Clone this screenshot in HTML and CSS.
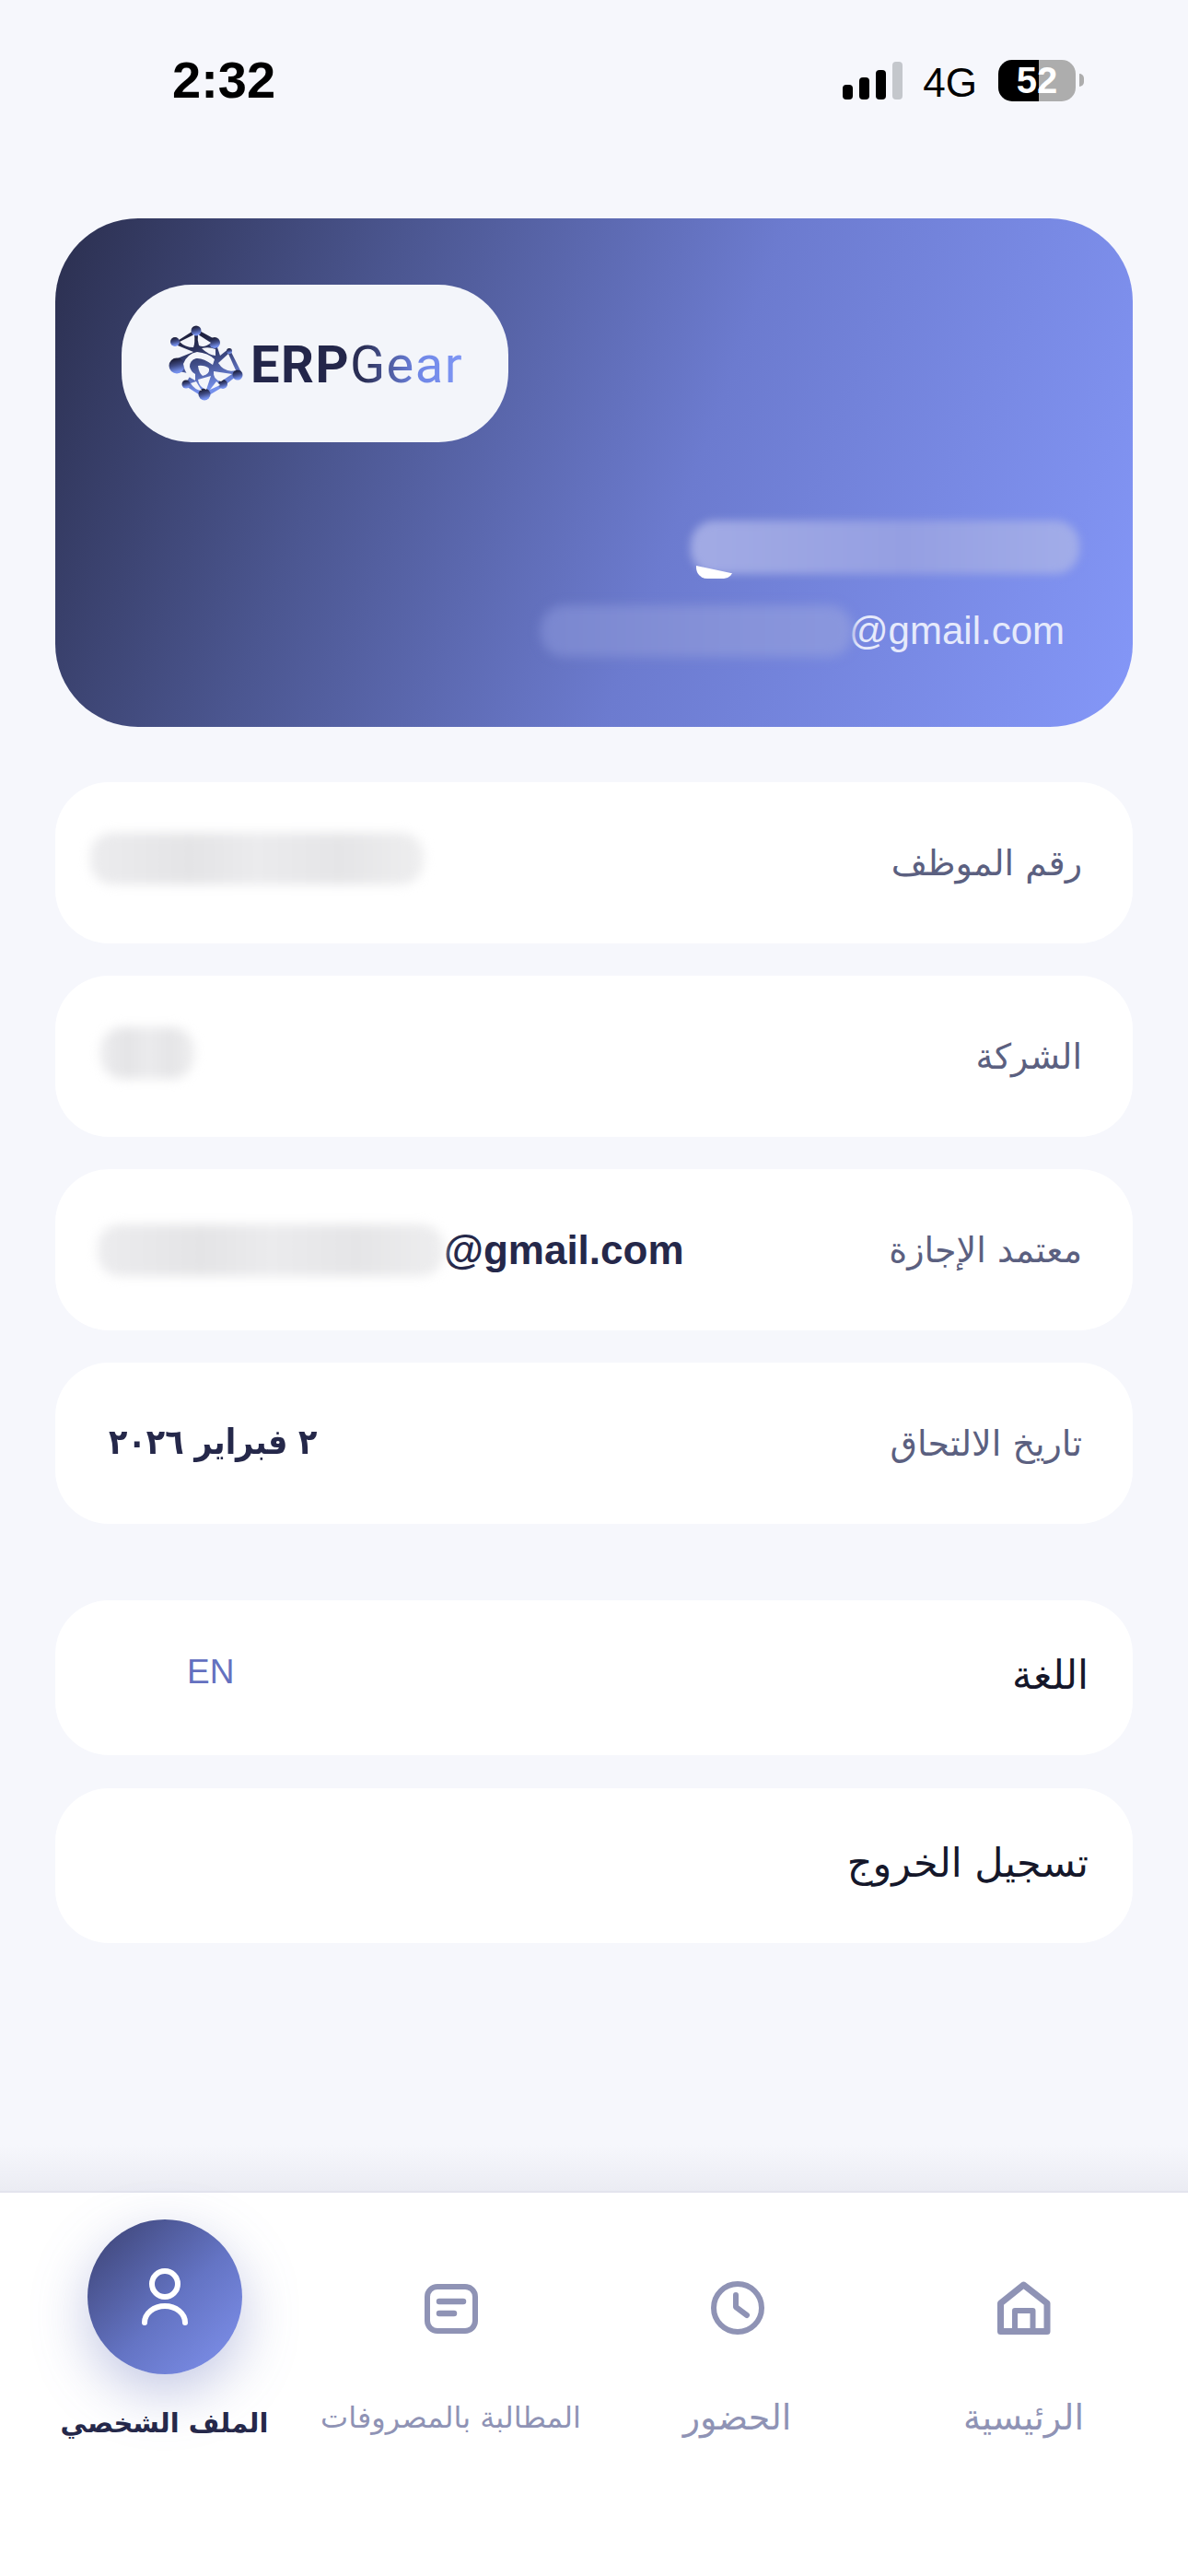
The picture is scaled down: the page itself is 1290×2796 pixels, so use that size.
FILE: index.html
```html
<!DOCTYPE html>
<html lang="ar" dir="rtl">
<head>
    <meta charset="UTF-8">
    <title>الملف الشخصي</title>
    <link rel="stylesheet" href="styles.css">
</head>
<body>
    <div class="status-bar" dir="ltr">
        <span class="time">2:32</span>
        <div class="status-right">
            <div class="signal">
                <span class="bar bar-1"></span>
                <span class="bar bar-2"></span>
                <span class="bar bar-3"></span>
                <span class="bar bar-4"></span>
            </div>
            <span class="network">4G</span>
            <div class="battery">52</div>
            <span class="battery-nub"></span>
        </div>
    </div>

    <main class="content">
        <section class="hero" dir="ltr">
            <div class="logo-pill">
                <svg class="logo-mark" viewBox="0 0 110 110">
                    <defs>
                        <linearGradient id="markFill" x1="0" y1="0" x2="0.25" y2="1">
                            <stop offset="0.2" stop-color="#1f2240"/>
                            <stop offset="0.55" stop-color="#3e4a84"/>
                            <stop offset="0.95" stop-color="#7590ec"/>
                        </linearGradient>
                    </defs>
                    <g fill="url(#markFill)">
                        <polygon points="43,17 63,28 69,46 79,38 92,64 72,80 52,92 30,78 38,66 20,62 20,50 40,42 18,33"/>
                        <circle cx="43" cy="19" r="5.5"/>
                        <circle cx="20" cy="31" r="5"/>
                        <circle cx="63" cy="32" r="6"/>
                        <circle cx="22" cy="57" r="8.5"/>
                        <circle cx="79" cy="41" r="3"/>
                        <circle cx="88" cy="67" r="5.5"/>
                        <circle cx="72" cy="77" r="5"/>
                        <circle cx="32" cy="77" r="4.5"/>
                        <circle cx="52" cy="88" r="6.5"/>
                    </g>
                    <g fill="#f3f5fa">
                        <path d="M25,31 L41,23 Q42,32 40,37 Q31,37 25,31Z"/>
                        <path d="M45,23 L59,32 Q52,38 46,35 Q44,29 45,23Z"/>
                        <path d="M49,38 Q57,36 64,39 L64,46 Q56,45 49,38Z"/>
                        <path d="M29,55 Q33,44 44,42 Q56,43 63,50 L61,56 Q50,48 43,49 Q36,51 36,58 Q37,63 42,66 L42,73 Q31,69 29,55Z"/>
                        <path d="M45,57 Q52,56 57,60 Q58,66 50,68 Q46,65 45,57Z"/>
                        <path d="M67,54 L78,44 L86,62 Q74,65 67,54Z"/>
                        <path d="M62,63 L82,66 L70,74 Q61,72 62,63Z"/>
                        <path d="M45,72 L59,68 L54,83 Q46,80 45,72Z"/>
                        <path d="M37,76 L43,74 L49,84 Q41,83 37,76Z"/>
                        <path d="M58,83 L65,74 L69,78 Z"/>
                    </g>
                </svg>
                <span class="logo-text"><span class="logo-erp">ERP</span><span class="logo-gear">Gear</span></span>
            </div>
            <div class="hero-name">
                <span class="smudge"></span>
            </div>
            <div class="hero-email">
                <span class="hero-email-blur"></span>
                <span>@gmail.com</span>
            </div>
        </section>

        <section class="info-list">
            <div class="row">
                <span class="label">رقم الموظف</span>
                <span class="blur blur-id"></span>
            </div>
            <div class="row">
                <span class="label">الشركة</span>
                <span class="blur blur-company"></span>
            </div>
            <div class="row">
                <span class="label">معتمد الإجازة</span>
                <span class="value value-email" dir="ltr"><span class="blur blur-email"></span>@gmail.com</span>
            </div>
            <div class="row">
                <span class="label">تاريخ الالتحاق</span>
                <span class="value value-date">٢ فبراير ٢٠٢٦</span>
            </div>
        </section>

        <section class="action-list">
            <div class="row action">
                <span class="action-label">اللغة</span>
                <span class="lang">EN</span>
            </div>
            <div class="row action">
                <span class="action-label">تسجيل الخروج</span>
            </div>
        </section>

        <div class="tab-fade"></div>
    </main>

    <nav class="tabbar">
        <div class="tab">
            <svg class="tab-icon" viewBox="0 0 58 58" fill="none" stroke="#8f93b5" stroke-width="7" stroke-linejoin="round">
                <path d="M3.5,54.5 V24 L28.5,4 L54,24 V54.5 Z"/>
                <path d="M19,54 V32 H38.5 V54" stroke-width="6"/>
            </svg>
            <span class="tab-label tab-label-wide">الرئيسية</span>
        </div>
        <div class="tab">
            <svg class="tab-icon" viewBox="0 0 58 58" fill="none" stroke="#8f93b5" stroke-width="6" stroke-linecap="round" stroke-linejoin="round">
                <circle cx="29" cy="29" r="26"/>
                <path d="M27,15 V28 L39,37"/>
            </svg>
            <span class="tab-label tab-label-wide">الحضور</span>
        </div>
        <div class="tab">
            <svg class="tab-icon" viewBox="0 0 58 58" fill="none" stroke="#8f93b5" stroke-width="6" stroke-linecap="round">
                <rect x="3" y="6" width="52" height="48" rx="11"/>
                <path d="M16,22 H42 M16,35 H32" stroke-width="6.5"/>
            </svg>
            <span class="tab-label">المطالبة بالمصروفات</span>
        </div>
        <div class="tab tab-active">
            <div class="tab-circle">
                <svg class="person" viewBox="0 0 60 70" fill="none" stroke="#ffffff" stroke-width="6" stroke-linecap="round">
                    <circle cx="30" cy="21" r="14"/>
                    <path d="M8,63 A22,18 0 0 1 52,63"/>
                </svg>
            </div>
            <span class="tab-label">الملف الشخصي</span>
        </div>
    </nav>
</body>
</html>
```

FILE: styles.css
```css
html, body {
    margin: 0;
    padding: 0;
}
body {
    width: 1290px;
    height: 2796px;
    overflow: hidden;
    display: flex;
    flex-direction: column;
    background: #f6f7fc;
    font-family: "DejaVu Sans", sans-serif;
    color: #25284a;
}

/* status bar */
.status-bar {
    height: 237px;
    box-sizing: border-box;
    padding: 56px 113px 0 187px;
    display: flex;
    justify-content: space-between;
    align-items: flex-start;
    font-family: "Liberation Sans", sans-serif;
    color: #000;
}
.time {
    font-size: 56px;
    font-weight: 700;
    line-height: 62px;
}
.status-right {
    display: flex;
    align-items: center;
    height: 62px;
}
.signal {
    display: flex;
    align-items: flex-end;
    gap: 7px;
    height: 41px;
    margin-right: 22px;
}
.bar {
    width: 11px;
    border-radius: 4px;
    background: #000;
}
.bar-1 { height: 16px; }
.bar-2 { height: 24px; }
.bar-3 { height: 32px; }
.bar-4 { height: 41px; background: #c4c7cc; }
.network {
    font-size: 44px;
    line-height: 44px;
    margin-top: 6px;
    margin-right: 23px;
}
.battery {
    width: 84px;
    height: 45px;
    border-radius: 15px;
    background: linear-gradient(90deg, #000 52%, #adadad 52%);
    color: #fff;
    font-size: 40px;
    font-weight: 700;
    line-height: 45px;
    text-align: center;
}
.battery-nub {
    width: 5px;
    height: 14px;
    margin-left: 4px;
    border-radius: 0 7px 7px 0;
    background: #adadad;
}

/* page body */
.content {
    flex: 1;
    display: flex;
    flex-direction: column;
    padding: 0 60px;
}
.hero {
    height: 552px;
    box-sizing: border-box;
    padding: 72px 58px 0 72px;
    border-radius: 90px;
    background: linear-gradient(110deg, #2b2f4f 0%, #4b5690 28%, #6c7bcf 58%, #8497f8 100%);
    display: flex;
    flex-direction: column;
    align-items: flex-end;
    font-family: "Liberation Sans", sans-serif;
}
.logo-pill {
    align-self: flex-start;
    width: 420px;
    height: 171px;
    box-sizing: border-box;
    padding-left: 38px;
    border-radius: 76px;
    background: #f3f5fa;
    display: flex;
    align-items: center;
}
.logo-mark {
    width: 110px;
    height: 110px;
    margin-right: -8px;
}
.logo-text {
    display: flex;
    font-family: Roboto, sans-serif;
    font-size: 56px;
    letter-spacing: 1.5px;
    margin-top: 2px;
}
.logo-erp {
    font-weight: 700;
    color: #23264a;
}
.logo-gear {
    font-weight: 400;
    background: linear-gradient(90deg, #2a2e55 12%, #4a5797 32%, #6f86e6 60%, #7f97f5 100%);
    -webkit-background-clip: text;
    background-clip: text;
    color: transparent;
}
.hero-name {
    position: relative;
    width: 422px;
    height: 58px;
    margin-top: 85px;
}
.hero-name::before {
    content: "";
    position: absolute;
    inset: 0;
    border-radius: 26px;
    background: linear-gradient(90deg, #a2abe4, #959fe2 55%, #a2ade9);
    filter: blur(5px);
}
.smudge {
    position: absolute;
    left: 6px;
    bottom: -5px;
    width: 40px;
    height: 14px;
    border-radius: 0 0 10px 12px;
    background: #fff;
    clip-path: polygon(0 0, 100% 60%, 100% 100%, 0 100%);
}
.hero-email {
    display: flex;
    align-items: center;
    height: 56px;
    margin-top: 34px;
    margin-right: 16px;
    color: #e6eafb;
    font-size: 42px;
}
.hero-email-blur {
    width: 339px;
    height: 56px;
    margin-right: -4px;
    border-radius: 26px;
    background: linear-gradient(90deg, #7a87cf, #8692d9 60%, #8a97de);
    filter: blur(6px);
}

/* rows */
.info-list {
    margin-top: 60px;
    display: flex;
    flex-direction: column;
    gap: 35px;
}
.row {
    height: 175px;
    box-sizing: border-box;
    padding: 0 55px 0 38px;
    border-radius: 58px;
    background: #fff;
    display: flex;
    justify-content: space-between;
    align-items: center;
}
.label {
    font-size: 38px;
    color: #5b6080;
}
.value {
    font-weight: 700;
}
.value-email {
    display: flex;
    align-items: center;
    font-family: "Liberation Sans", sans-serif;
    font-size: 44px;
    margin-left: 8px;
}
.value-date {
    font-size: 38px;
    margin-left: 20px;
    margin-top: -4px;
    transform: scaleX(0.88);
    transform-origin: left center;
}
.blur {
    display: block;
    height: 56px;
    border-radius: 24px;
    background: linear-gradient(90deg, #ececee, #e4e4e6 30%, #ebebed 50%, #e5e5e7 75%, #eeeeef);
    filter: blur(6px);
}
.blur-id {
    width: 362px;
    margin-top: -10px;
}
.blur-company {
    width: 102px;
    margin-left: 11px;
    margin-top: -7px;
}
.blur-email {
    width: 376px;
    margin-top: 0;
}
.action-list {
    margin-top: 83px;
    display: flex;
    flex-direction: column;
    gap: 36px;
}
.action {
    height: 168px;
    padding: 0 48px 0 143px;
}
.action-label {
    font-size: 43px;
    color: #15172a;
    margin-top: -6px;
}
.lang {
    font-family: "Liberation Sans", sans-serif;
    font-size: 37px;
    color: #6471c0;
    margin-top: -12px;
}
.tab-fade {
    margin: auto -60px 0;
    height: 50px;
    background: linear-gradient(180deg, #f6f7fc, #ebecf3);
}

/* bottom tabs */
.tabbar {
    height: 418px;
    box-sizing: border-box;
    padding: 0 23px;
    border-top: 2px solid #e3e4ee;
    background: #fff;
    display: grid;
    grid-template-columns: repeat(4, 311px);
    align-items: start;
}
.tab {
    display: flex;
    flex-direction: column;
    align-items: center;
}
.tab-icon {
    width: 58px;
    height: 58px;
    margin-top: 96px;
}
.tab-label {
    margin-top: 66px;
    font-size: 32px;
    line-height: 48px;
    color: #8f93b5;
    white-space: nowrap;
}
.tab-label-wide {
    font-size: 38px;
}
.tab-circle {
    width: 168px;
    height: 168px;
    margin-top: 29px;
    border-radius: 50%;
    background: linear-gradient(135deg, #3a4070 0%, #6474c4 55%, #8092ee 100%);
    box-shadow: 0 20px 60px rgba(88, 102, 180, 0.36);
    display: flex;
    align-items: center;
    justify-content: center;
}
.person {
    width: 60px;
    height: 70px;
}
.tab-active .tab-label {
    margin-top: 29px;
    font-size: 29px;
    font-weight: 700;
    color: #25284a;
}
```
